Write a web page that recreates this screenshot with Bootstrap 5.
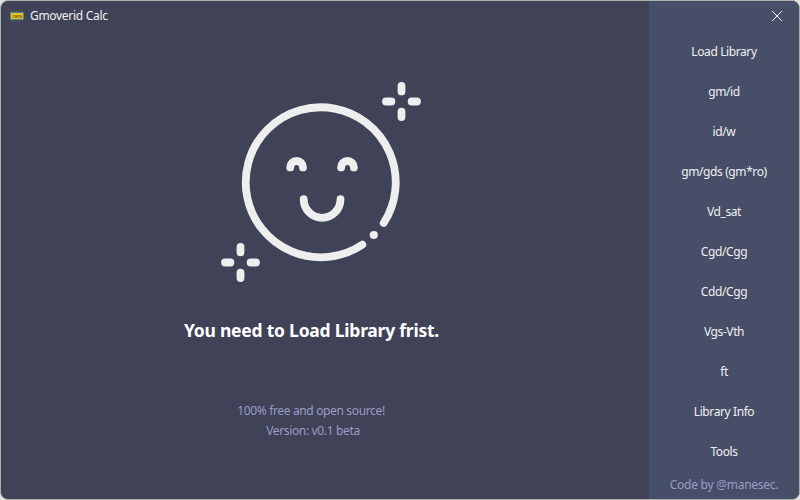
<!DOCTYPE html>
<html lang="en">
<head>
<meta charset="utf-8">
<meta name="viewport" content="width=device-width, initial-scale=1">
<title>Gmoverid Calc</title>
<link href="https://cdn.jsdelivr.net/npm/bootstrap@5.3.0/dist/css/bootstrap.min.css" rel="stylesheet">
<style>
  body { background: #e4e4e4; font-family: "Noto Sans", "Open Sans", sans-serif; font-size: 12px; line-height: 20px; color: #f0f0f0; }
  .app-window { width: 800px; height: 500px; border: 1px solid #aeb0ac; border-radius: 8px; background: #404258; }
  .side-panel { width: 150px; background: #474e68; }
  .title-strip { height: 30px; padding-left: 9px; }
  .app-title { letter-spacing: -.3px; margin-left: 6px; }
  .close-row { height: 31px; padding: 0 17px 1px 0; }
  .side-panel .nav-link { height: 40px; padding: 10px 0; line-height: 20px; color: #f0f0f0; letter-spacing: -.4px; }
  .face { width: 200px; height: 200px; margin: 51px 0 0 -9px; }
  .headline { font-size: 17.5px; line-height: 26px; font-weight: 700; letter-spacing: -.23px; margin: 35px 27px 0 0; color: #fff; }
  .notes { margin: 58px 28px 0 0; }
  .muted-ink { color: #9a9cc4; letter-spacing: -.35px; }
  .credit { margin-top: 3px; letter-spacing: -.25px; }
</style>
<script src="https://cdn.jsdelivr.net/npm/bootstrap@5.3.0/dist/js/bootstrap.bundle.min.js"></script>
</head>
<body class="overflow-hidden">
<div class="app-window d-flex overflow-hidden">
  <main class="flex-grow-1 d-flex flex-column">
    <header class="title-strip d-flex align-items-center">
      <svg class="overflow-visible" width="14" height="12" viewBox="0 0 14 12" aria-hidden="true">
        <path d="M2 0v12M4.5 0v12M7 0v12M9.5 0v12M12 0v12" stroke="#55564f" stroke-width="1"/>
        <rect y="2" width="14" height="8" fill="#3c8794"/>
        <rect x="1" y="3" width="12" height="6" fill="#efc51d"/>
        <text x="2" y="7.5" font-family="Liberation Sans, sans-serif" font-size="4.2" font-weight="700" textLength="10" lengthAdjust="spacingAndGlyphs" fill="#5b4a12">CMOS</text>
      </svg>
      <span class="app-title">Gmoverid Calc</span>
    </header>
    <section class="d-flex flex-column align-items-center text-center">
      <svg class="face" viewBox="221 82 200 200" fill="none" stroke="#eee" stroke-width="7.8" stroke-linecap="round" aria-hidden="true">
        <path d="M362.3 244.7A75 75 0 1 1 383.7 223"/>
        <circle cx="373.8" cy="235" r="4.1" fill="#eee" stroke="none"/>
        <path d="M290.2 167.4a6.4 6.4 0 0 1 12.8 0M341.1 167.4a6.4 6.4 0 0 1 12.8 0"/>
        <path d="M303.7 199.2a18.3 18.5 0 0 0 36.8 0"/>
        <path d="M401.5 86v5.4M401.5 111.6v5.4M386 101.5h5.4M411.6 101.5h5.4"/>
        <path d="M240.5 247v5.4M240.5 272.6v5.4M225 262.5h5.4M250.6 262.5h5.4"/>
      </svg>
      <h1 class="headline">You need to Load Library frist.</h1>
      <div class="notes muted-ink">
        <div>100% free and open source!</div>
        <div class="ps-1">Version: v0.1 beta</div>
      </div>
    </section>
  </main>
  <aside class="side-panel d-flex flex-column flex-shrink-0">
    <div class="close-row d-flex align-items-center justify-content-end">
      <svg role="button" aria-label="Close" width="10" height="10" viewBox="0 0 10 10" stroke="#eee" stroke-width="1"><path d="M0 0l10 10M10 0L0 10"/></svg>
    </div>
    <nav class="nav flex-column text-center">
      <a class="nav-link" href="#">Load Library</a>
      <a class="nav-link" href="#">gm/id</a>
      <a class="nav-link" href="#">id/w</a>
      <a class="nav-link" href="#">gm/gds (gm*ro)</a>
      <a class="nav-link" href="#">Vd_sat</a>
      <a class="nav-link" href="#">Cgd/Cgg</a>
      <a class="nav-link" href="#">Cdd/Cgg</a>
      <a class="nav-link" href="#">Vgs-Vth</a>
      <a class="nav-link" href="#">ft</a>
      <a class="nav-link" href="#">Library Info</a>
      <a class="nav-link" href="#">Tools</a>
    </nav>
    <div class="credit muted-ink text-center">Code by @manesec.</div>
  </aside>
</div>
</body>
</html>
